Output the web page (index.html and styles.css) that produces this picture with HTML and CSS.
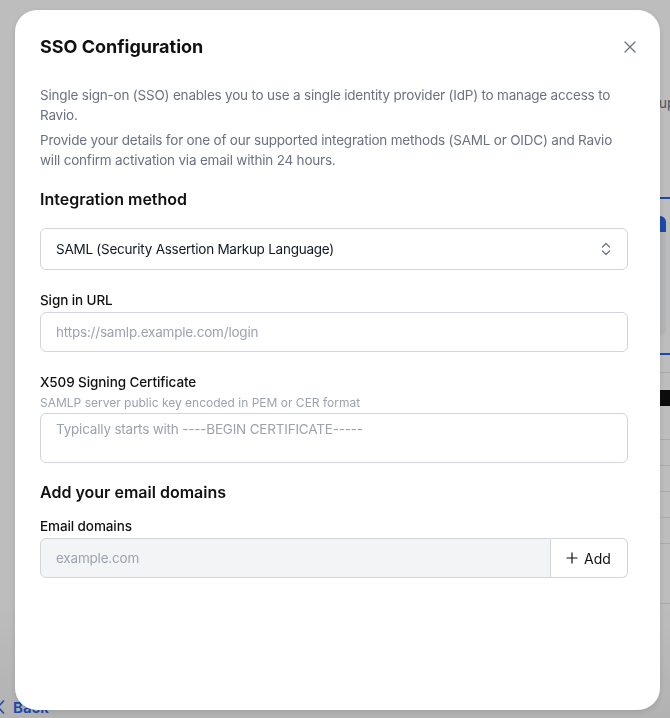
FILE: index.html
```html
<!DOCTYPE html>
<html lang="en">
<head>
    <meta charset="UTF-8">
    <meta name="viewport" content="width=device-width, initial-scale=1.0">
    <title>SSO Configuration</title>
    <link rel="stylesheet" href="styles.css">
</head>
<body>

<!-- Settings page behind the dialog -->
<div class="page">
    <div class="page-main"></div>
    <aside class="page-side">
        <p class="side-title">Setup</p>
        <div class="side-tabs"></div>
        <div class="side-card">
            <div class="side-card-head"></div>
        </div>
        <div class="side-tabs"></div>
        <div class="side-divider"></div>
        <div class="side-bar"></div>
        <div class="side-rows">
            <div class="side-row"></div>
            <div class="side-row"></div>
            <div class="side-row"></div>
            <div class="side-row"></div>
            <div class="side-row tall"></div>
            <div class="side-row"></div>
        </div>
    </aside>
    <a class="back-link" href="#">
        <svg width="8" height="14" viewBox="0 0 8 14"><path d="M6.5 1 1 7l5.5 6" fill="none" stroke="currentColor" stroke-width="1.6" stroke-linecap="round" stroke-linejoin="round"/></svg>
        Back
    </a>
</div>

<!-- SSO dialog -->
<div class="backdrop">
    <div class="modal">
        <div class="modal-header">
            <h2>SSO Configuration</h2>
            <button class="close-btn" type="button" aria-label="Close">
                <svg width="12" height="12" viewBox="0 0 12 12"><path d="M1 1l10 10M11 1 1 11" stroke="currentColor" stroke-width="1.3" stroke-linecap="round"/></svg>
            </button>
        </div>

        <p class="intro">Single sign-on (SSO) enables you to use a single identity provider (IdP) to manage access to Ravio.</p>
        <p class="intro">Provide your details for one of our supported integration methods (SAML or OIDC) and Ravio will confirm activation via email within 24 hours.</p>

        <h3>Integration method</h3>
        <div class="select">
            <span>SAML (Security Assertion Markup Language)</span>
            <svg width="10" height="14" viewBox="0 0 10 14"><path d="M1.5 5 5 1.5 8.5 5M1.5 9 5 12.5 8.5 9" fill="none" stroke="currentColor" stroke-width="1.2" stroke-linecap="round" stroke-linejoin="round"/></svg>
        </div>

        <div class="field">
            <label for="signInUrl">Sign in URL</label>
            <input type="text" id="signInUrl" placeholder="https://samlp.example.com/login">
        </div>

        <div class="field">
            <label for="certificate">X509 Signing Certificate</label>
            <p class="hint">SAMLP server public key encoded in PEM or CER format</p>
            <textarea id="certificate" placeholder="Typically starts with ----BEGIN CERTIFICATE-----"></textarea>
        </div>

        <h3 class="domains-title">Add your email domains</h3>
        <div class="field">
            <label for="emailDomain">Email domains</label>
            <div class="input-addon">
                <input type="text" id="emailDomain" placeholder="example.com" disabled>
                <button type="button" class="add-btn">
                    <svg width="12" height="12" viewBox="0 0 12 12"><path d="M6 0.5v11M0.5 6h11" stroke="currentColor" stroke-width="1.2"/></svg>
                    Add
                </button>
            </div>
        </div>
    </div>
</div>

</body>
</html>
```

FILE: styles.css
```css
/* Base */
* {
    box-sizing: border-box;
}

body {
    margin: 0;
    font-family: 'Inter', 'Noto Sans', sans-serif;
    color: #111827;
    background: #fff;
    height: 718px;
    overflow: hidden;
}

/* Page underneath the dialog */
.page {
    display: grid;
    grid-template-columns: 1fr 15px;
    grid-template-rows: 1fr auto;
    height: 718px;
    background: linear-gradient(#fff 0, #fff 600px, #f1f1f1 718px);
}

.page-side {
    padding-top: 93px;
    overflow: hidden;
}

.side-title {
    margin: 0 0 0 -18px;
    font-size: 14px;
    line-height: 20px;
    color: #6b7280;
    white-space: nowrap;
}

.side-tabs {
    height: 2px;
    margin-top: 84px;
    background: #2563eb;
}

.side-card {
    margin: 17px 4px 0 0;
    height: 120px;
    border-radius: 0 6px 6px 0;
    background: #f3f4f6;
    overflow: hidden;
}

.side-card-head {
    height: 16px;
    background: #2563eb;
}

.side-card + .side-tabs {
    margin-top: 17px;
}

.side-divider {
    height: 1px;
    margin-top: 17px;
    background: #e5e7eb;
}

.side-bar {
    height: 16px;
    margin-top: 17px;
    background: #111;
}

.side-rows {
    padding-top: 33px;
}

.side-row {
    height: 26px;
    border-top: 1px solid #e5e7eb;
}

.side-row.tall {
    height: 60px;
}

.back-link {
    grid-column: 1 / 3;
    display: flex;
    align-items: center;
    gap: 8px;
    height: 18px;
    margin: 0 0 2px -3px;
    font-size: 15px;
    font-weight: 600;
    color: #2563eb;
    text-decoration: none;
}

/* Dim overlay + dialog */
.backdrop {
    position: fixed;
    inset: 0;
    padding: 10px 10px 8px 15px;
    background: rgba(0, 0, 0, 0.26);
}

.modal {
    width: 645px;
    height: 700px;
    padding: 23px 32px 0 25px;
    background: #fff;
    border-radius: 22px;
    box-shadow: 0 2px 6px rgba(0, 0, 0, 0.12);
}

.modal-header {
    display: flex;
    align-items: center;
    justify-content: space-between;
    margin-bottom: 24px;
}

.modal-header h2 {
    margin: 0;
    font-size: 18px;
    line-height: 28px;
    font-weight: 700;
    color: #111;
}

.close-btn {
    display: flex;
    padding: 0;
    margin-right: -8px;
    border: none;
    background: none;
    color: #6b7280;
    cursor: pointer;
}

.intro {
    margin: 0 0 5px;
    font-size: 13.5px;
    line-height: 20px;
    letter-spacing: -0.2px;
    color: #6b7280;
}

h3 {
    margin: 17px 0 17px;
    font-size: 16px;
    line-height: 24px;
    font-weight: 600;
    color: #111;
}

.domains-title {
    margin: 17px 0 12px;
}

.domains-title + .field {
    margin-top: 0;
}

/* Form controls */
.select {
    display: flex;
    align-items: center;
    justify-content: space-between;
    height: 42px;
    padding: 0 16px 0 15px;
    border: 1px solid #d1d5db;
    border-radius: 6px;
    font-size: 13.5px;
    letter-spacing: -0.25px;
    color: #111827;
}

.select svg {
    color: #6b7280;
}

.field {
    margin-top: 20px;
}

.field label {
    display: block;
    margin-bottom: 2px;
    font-size: 13.5px;
    line-height: 20px;
    letter-spacing: -0.1px;
    font-weight: 500;
    color: #111;
}

.hint {
    margin: 2px 0 1px;
    font-size: 12px;
    line-height: 18px;
    color: #9ca3af;
}

.field input,
.field textarea {
    display: block;
    width: 100%;
    height: 40px;
    padding: 0 15px;
    font-family: inherit;
    font-size: 13.5px;
    letter-spacing: -0.2px;
    color: #111827;
    border: 1px solid #d1d5db;
    border-radius: 6px;
    background: #fff;
    outline: none;
}

.field textarea {
    height: 50px;
    padding: 5px 15px;
    line-height: 20px;
    resize: none;
}

.field input::placeholder,
.field textarea::placeholder {
    color: #9ca3af;
}

.input-addon {
    display: flex;
}

.input-addon input {
    flex: 1;
    border-radius: 6px 0 0 6px;
    background: #f3f4f6;
}

.add-btn {
    display: flex;
    align-items: center;
    gap: 6px;
    width: 77px;
    height: 40px;
    padding: 0 0 0 15px;
    font-family: inherit;
    font-size: 14px;
    color: #111;
    background: #fff;
    border: 1px solid #d1d5db;
    border-left: none;
    border-radius: 0 6px 6px 0;
    cursor: pointer;
}
```
